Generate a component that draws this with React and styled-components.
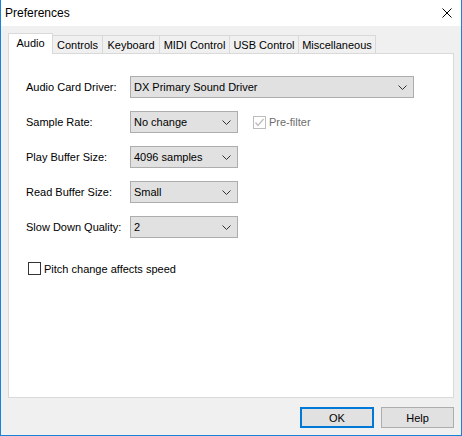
import styled, { createGlobalStyle } from 'styled-components';

const GlobalStyle = createGlobalStyle`
  html, body {
    margin: 0;
    padding: 0;
    background: #fff;
  }
  body {
    font-family: "Liberation Sans", Arial, sans-serif;
    font-size: 11px;
    color: #000;
  }
`;

const tabs = ['Audio', 'Controls', 'Keyboard', 'MIDI Control', 'USB Control', 'Miscellaneous'];
const tabWidths = [45, 50, 57, 70, 69, 77];

const Chevron = () => (
  <svg width="9" height="5" viewBox="0 0 9 5">
    <polyline points="0.5,0.5 4.5,4.5 8.5,0.5" fill="none" stroke="#333" strokeWidth="1" />
  </svg>
);

const Check = ({ color }) => (
  <svg width="11" height="11" viewBox="0 0 11 11">
    <polyline points="1.5,5.5 4,8.5 9.5,2" fill="none" stroke={color} strokeWidth="1.2" />
  </svg>
);

const Combo = ({ value, width }) => (
  <ComboBox $width={width}>
    <span>{value}</span>
    <Chevron />
  </ComboBox>
);

const App = () => {
  return (
    <>
      <GlobalStyle />
      <Window>
        <TitleBar>
          <Title>Preferences</Title>
          <CloseButton>
            <svg width="10" height="10" viewBox="0 0 10 10">
              <path d="M0.5 0.5 L9.5 9.5 M9.5 0.5 L0.5 9.5" stroke="#000" strokeWidth="1" />
            </svg>
          </CloseButton>
        </TitleBar>

        <Body>
          <TabRow>
            {tabs.map((t, i) => (
              <Tab key={t} $active={i === 0} $width={tabWidths[i]}>
                {t}
              </Tab>
            ))}
          </TabRow>

          <Panel>
            <Form>
              <Label>Audio Card Driver:</Label>
              <Combo value="DX Primary Sound Driver" width={284} />

              <Label>Sample Rate:</Label>
              <Inline>
                <Combo value="No change" width={108} />
                <CheckLabel $disabled>
                  <CheckBox $disabled>
                    <Check color="#bcbcbc" />
                  </CheckBox>
                  Pre-filter
                </CheckLabel>
              </Inline>

              <Label>Play Buffer Size:</Label>
              <Combo value="4096 samples" width={108} />

              <Label>Read Buffer Size:</Label>
              <Combo value="Small" width={108} />

              <Label>Slow Down Quality:</Label>
              <Combo value="2" width={108} />
            </Form>

            <PitchRow>
              <CheckLabel>
                <CheckBox />
                Pitch change affects speed
              </CheckLabel>
            </PitchRow>
          </Panel>

          <Footer>
            <Button $default $width={74}>OK</Button>
            <Button $width={73}>Help</Button>
          </Footer>
        </Body>
      </Window>
    </>
  );
};

const Window = styled.div`
  width: 462px;
  height: 436px;
  box-sizing: border-box;
  border: 1px solid #1883d7;
  border-top: none;
  display: flex;
  flex-direction: column;
  background: #f0f0f0;
`;

const TitleBar = styled.div`
  height: 26px;
  flex-shrink: 0;
  background: #fff;
  display: flex;
  align-items: center;
  justify-content: space-between;
  padding: 0 9px 0 4px;
`;

const Title = styled.span`
  font-size: 12px;
  color: #000;
  padding-bottom: 1px;
`;

const CloseButton = styled.div`
  display: flex;
  align-items: center;
  padding-bottom: 1px;
`;

const Body = styled.div`
  flex: 1;
  display: flex;
  flex-direction: column;
  padding: 7px 7px 0;
`;

const TabRow = styled.div`
  display: flex;
  align-items: flex-end;
  height: 20px;
  position: relative;
  z-index: 1;
`;

const Tab = styled.div`
  box-sizing: border-box;
  width: ${(p) => p.$width}px;
  height: ${(p) => (p.$active ? 21 : 18)}px;
  margin-bottom: ${(p) => (p.$active ? -1 : 0)}px;
  background: ${(p) => (p.$active ? '#fff' : '#f0f0f0')};
  border: 1px solid #d9d9d9;
  border-bottom: none;
  border-left-width: ${(p) => (p.$active ? 1 : 0)}px;
  display: flex;
  align-items: center;
  justify-content: center;
  padding-bottom: ${(p) => (p.$active ? 3 : 0)}px;
  white-space: nowrap;
  font-size: 11px;
`;

const Panel = styled.div`
  box-sizing: border-box;
  height: 345px;
  background: #fff;
  border: 1px solid #d9d9d9;
  padding: 22px 0 0 17px;
`;

const Form = styled.div`
  display: grid;
  grid-template-columns: 104px auto;
  row-gap: 13px;
  align-items: center;
  justify-items: start;
`;

const Label = styled.span`
  font-size: 11px;
  white-space: nowrap;
`;

const ComboBox = styled.div`
  box-sizing: border-box;
  width: ${(p) => p.$width}px;
  height: 22px;
  background: #e1e1e1;
  border: 1px solid #adadad;
  display: flex;
  align-items: center;
  justify-content: space-between;
  padding: 0 6px 0 3px;
  font-size: 11px;
`;

const Inline = styled.div`
  display: flex;
  align-items: center;
  gap: 15px;
`;

const CheckLabel = styled.label`
  display: flex;
  align-items: center;
  gap: 3px;
  font-size: 11px;
  color: ${(p) => (p.$disabled ? '#6d6d6d' : '#000')};
`;

const CheckBox = styled.span`
  box-sizing: border-box;
  width: 13px;
  height: 13px;
  background: #fff;
  border: 1px solid ${(p) => (p.$disabled ? '#bcbcbc' : '#333')};
  display: flex;
  align-items: center;
  justify-content: center;
`;

const PitchRow = styled.div`
  margin-top: 24px;
  padding-left: 2px;
`;

const Footer = styled.div`
  display: flex;
  justify-content: flex-end;
  gap: 7px;
  margin-top: 9px;
`;

const Button = styled.div`
  box-sizing: border-box;
  width: ${(p) => p.$width}px;
  height: 21px;
  background: #e1e1e1;
  border: ${(p) => (p.$default ? '2px solid #0078d7' : '1px solid #adadad')};
  display: flex;
  align-items: center;
  justify-content: center;
  font-size: 11px;
`;

export default App;
